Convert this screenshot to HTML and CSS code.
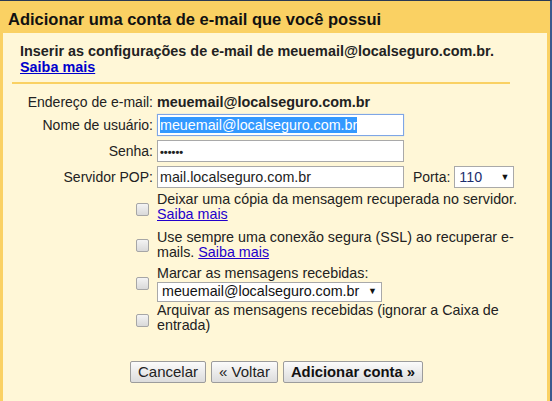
FILE: index.html
```html
<!DOCTYPE html>
<html lang="pt-BR">
<head>
<meta charset="utf-8">
<title>Adicionar conta</title>
<link rel="stylesheet" href="styles.css">
</head>
<body>
<div class="frame">
  <div class="box">
    <div class="head">Adicionar uma conta de e-mail que você possui</div>
    <div class="panel">
      <div class="intro">
        <div class="intro-text">Inserir as configurações de e-mail de meuemail@localseguro.com.br.</div>
        <a class="intro-link" href="#">Saiba mais</a>
      </div>
      <table class="form">
        <tr class="r-addr">
          <td class="lbl">Endereço de e-mail:</td>
          <td class="val"><b class="addr">meuemail@localseguro.com.br</b></td>
        </tr>
        <tr class="r-in">
          <td class="lbl">Nome de usuário:</td>
          <td class="val"><span class="input focus"><span class="sel">meuemail@localseguro.com.br</span></span></td>
        </tr>
        <tr class="r-in">
          <td class="lbl">Senha:</td>
          <td class="val"><span class="input"><span class="dots">••••••</span></span></td>
        </tr>
        <tr class="r-in">
          <td class="lbl">Servidor POP:</td>
          <td class="val"><span class="pop-row"><span class="input">mail.localseguro.com.br</span><span class="porta">Porta:</span><span class="select port">110<span class="arrow">▼</span></span></span></td>
        </tr>
        <tr class="r-cb c1">
          <td class="cbcell"><span class="cb"></span></td>
          <td class="val txt">Deixar uma cópia da mensagem recuperada no servidor.<br><a href="#">Saiba mais</a></td>
        </tr>
        <tr class="r-cb c2">
          <td class="cbcell"><span class="cb"></span></td>
          <td class="val txt">Use sempre uma conexão segura (SSL) ao recuperar e-<br>mails. <a href="#">Saiba mais</a></td>
        </tr>
        <tr class="r-cb c3">
          <td class="cbcell"><span class="cb"></span></td>
          <td class="val txt">Marcar as mensagens recebidas:<br><span class="select label-sel">meuemail@localseguro.com.br<span class="arrow">▼</span></span></td>
        </tr>
        <tr class="r-cb c4">
          <td class="cbcell"><span class="cb"></span></td>
          <td class="val txt">Arquivar as mensagens recebidas (ignorar a Caixa de<br>entrada)</td>
        </tr>
      </table>
      <div class="buttons">
        <button class="btn">Cancelar</button>
        <button class="btn">« Voltar</button>
        <button class="btn primary">Adicionar conta »</button>
      </div>
    </div>
  </div>
</div>
</body>
</html>
```
FILE: styles.css
```css
html, body {
  margin: 0;
  padding: 0;
  background: #fff7d7;
}
body {
  font-family: Arial, "Liberation Sans", sans-serif;
  font-size: 14px;
  color: #222;
}
.frame {
  width: 550px;
  height: 400px;
  border-top: 1px solid #2a3a55;
  border-right: 2px solid #3b5a8f;
  overflow: hidden;
}
.box {
  width: 544px;
  height: 400px;
  background: #fff7d7;
  border-left: 3px solid #fad163;
  border-right: 3px solid #fad163;
}
.head {
  background: #fad163;
  height: 32px;
  margin-left: -3px;
  margin-right: -3px;
  padding-left: 8px;
  font-weight: bold;
  font-size: 16.5px;
  line-height: 36px;
  color: #111;
}
.panel {
  padding: 10px 0 0 0;
}
.intro {
  margin: 0 37px 0 9px;
  padding: 0 0 7px 8px;
  border-bottom: 2px solid #fad163;
  font-weight: bold;
  font-size: 14.4px;
  line-height: 16px;
}
.intro-link {
  color: #0000cc;
}
a {
  color: #2200cc;
}
.form {
  border-collapse: collapse;
  margin: 7px 0 0 17px;
}
.form td {
  padding: 0;
}
.lbl {
  text-align: right;
  width: 133px;
  padding-right: 4px !important;
  white-space: nowrap;
}
.addr {
  font-size: 14.4px;
}
.r-addr td {
  height: 21px;
}
.r-in td {
  height: 26px;
}
.input {
  display: inline-block;
  box-sizing: border-box;
  width: 247px;
  height: 22px;
  border: 1px solid #a9a9a9;
  background: #fff;
  font-size: 14.3px;
  line-height: 20px;
  padding-left: 2px;
  vertical-align: middle;
  color: #222;
}
.input.focus {
  border-color: #7ea6e6;
  box-shadow: 0 0 1px #aac6f2;
}
.sel {
  background: #3399ff;
  color: #fff;
}
.dots {
  font-size: 11px;
  font-weight: bold;
}
.pop-row {
  display: inline-flex;
  align-items: center;
}
.porta {
  margin: 0 4px 0 9px;
}
.select {
  display: inline-flex;
  align-items: center;
  justify-content: space-between;
  box-sizing: border-box;
  border: 1px solid #a9a9a9;
  background: #fff;
  font-size: 14.3px;
  padding: 0 4px;
}
.port {
  width: 60px;
  height: 22px;
  color: #1c2e6e;
}
.arrow {
  font-size: 9px;
  color: #111;
  margin-left: 6px;
}
.label-sel {
  width: 225px;
  height: 20px;
  margin-top: 1px;
  color: #111;
}
.cbcell {
  text-align: right;
  vertical-align: middle;
  padding-right: 8px !important;
}
.cb {
  display: inline-block;
  width: 11px;
  height: 11px;
  border: 1px solid #a6a6a6;
  border-radius: 2px;
  background: linear-gradient(#f4f4f4, #d9d9d9);
  vertical-align: middle;
}
.txt {
  font-size: 14.3px;
  line-height: 15px;
}
.c1 .txt {
  padding: 2px 0 4px 0 !important;
}
.c2 .txt {
  padding: 3.5px 0 2.5px 0 !important;
}
.c3 .txt {
  padding: 3.5px 0 0 0 !important;
}
.c4 .txt {
  padding: 1.5px 0 3px 0 !important;
}
.buttons {
  margin: 25px 0 0 127px;
  display: flex;
  gap: 5px;
}
.btn {
  height: 22px;
  border: 1px solid #9c9c9c;
  border-radius: 2px;
  background: linear-gradient(#fbfbfb, #dcdcdc);
  font-family: Arial, "Liberation Sans", sans-serif;
  font-size: 15px;
  color: #222;
  padding: 0 7px;
  line-height: 18px;
}
.btn.primary {
  font-weight: bold;
  font-size: 14.8px;
  color: #111;
}
```
